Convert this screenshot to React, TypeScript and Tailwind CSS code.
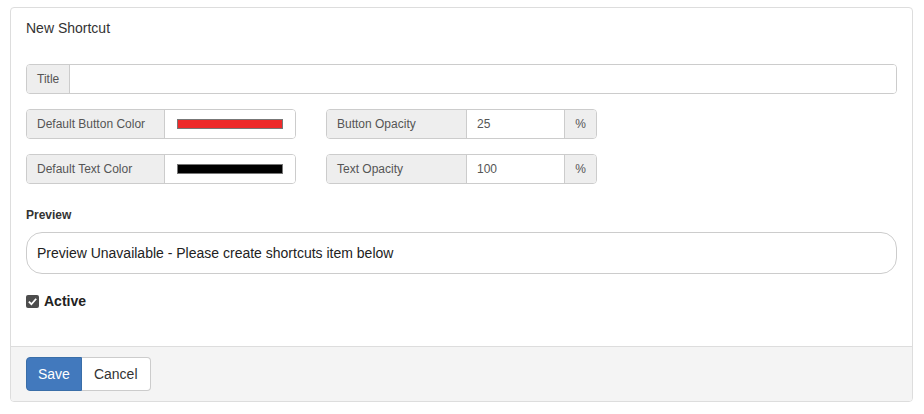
import React, { useState } from 'react';

const addon = 'flex items-center px-[10px] bg-[#eeeeee] text-[12px] text-[#555] whitespace-nowrap';

const ColorGroup: React.FC<{ label: string; color: string }> = ({ label, color }) => (
  <div className="flex h-[30px] w-[270px] rounded-[4px] border border-[#cccccc] overflow-hidden">
    <div className={`${addon} w-[138px] border-r border-[#cccccc]`}>{label}</div>
    <div className="flex-1 flex items-center pl-[12px] bg-white">
      <div className="w-[106px] h-[10px] border border-[#777]" style={{ backgroundColor: color }} />
    </div>
  </div>
);

const OpacityGroup: React.FC<{ label: string; value: string }> = ({ label, value }) => (
  <div className="flex h-[30px] w-[271px] rounded-[4px] border border-[#cccccc] overflow-hidden">
    <div className={`${addon} w-[140px] border-r border-[#cccccc]`}>{label}</div>
    <input
      defaultValue={value}
      className="w-[97px] px-[10px] text-[12px] text-[#555] bg-white outline-none"
    />
    <div className={`${addon} flex-1 justify-center border-l border-[#cccccc]`}>%</div>
  </div>
);

const App: React.FC = () => {
  const [active, setActive] = useState(true);

  return (
    <div className="min-h-screen bg-white pt-[7px] pl-[10px] font-['Liberation_Sans',Arial,sans-serif]">
      <div className="w-[903px] border border-[#dddddd] rounded-[4px] overflow-hidden">
        {/* Body */}
        <div className="px-[15px] pt-[10px] pb-[34px]">
          <h3 className="text-[14px] leading-[20px] text-[#333]">New Shortcut</h3>

          <div className="mt-[26px] flex h-[30px] w-[871px] rounded-[4px] border border-[#cccccc] overflow-hidden">
            <div className={`${addon} border-r border-[#cccccc]`}>Title</div>
            <input className="flex-1 px-[10px] text-[12px] bg-white outline-none" />
          </div>

          <div className="mt-[15px] flex gap-[30px]">
            <ColorGroup label="Default Button Color" color="#ee2a2a" />
            <OpacityGroup label="Button Opacity" value="25" />
          </div>
          <div className="mt-[15px] flex gap-[30px]">
            <ColorGroup label="Default Text Color" color="#000000" />
            <OpacityGroup label="Text Opacity" value="100" />
          </div>

          <div className="mt-[23px] text-[12px] font-bold text-[#333] leading-[16px]">Preview</div>
          <div className="mt-[9px] w-[871px] h-[42px] rounded-[16px] border border-[#cccccc] flex items-center px-[10px] text-[14px] text-[#222]">
            Preview Unavailable - Please create shortcuts item below
          </div>

          <label className="mt-[17px] flex items-center gap-[5px] cursor-pointer select-none">
            <span
              onClick={() => setActive(!active)}
              className={`w-[13px] h-[13px] rounded-[2px] flex items-center justify-center ${active ? 'bg-[#4d4d4d]' : 'border border-[#767676] bg-white'}`}
            >
              {active && (
                <svg viewBox="0 0 12 12" className="w-[11px] h-[11px]">
                  <path d="M2 6.2 L4.8 9 L10 3" fill="none" stroke="white" strokeWidth="2" />
                </svg>
              )}
            </span>
            <span className="text-[14px] font-bold text-[#222]">Active</span>
          </label>
        </div>

        {/* Footer */}
        <div className="border-t border-[#dddddd] bg-[#f4f4f4] px-[15px] py-[10px] flex">
          <button className="h-[34px] px-[11px] bg-[#4279bd] text-white text-[14px] rounded-l-[4px] border border-[#3a6ea8]">
            Save
          </button>
          <button className="h-[34px] px-[12px] bg-white text-[#333] text-[14px] rounded-r-[4px] border border-l-0 border-[#cccccc]">
            Cancel
          </button>
        </div>
      </div>
    </div>
  );
};

export default App;
